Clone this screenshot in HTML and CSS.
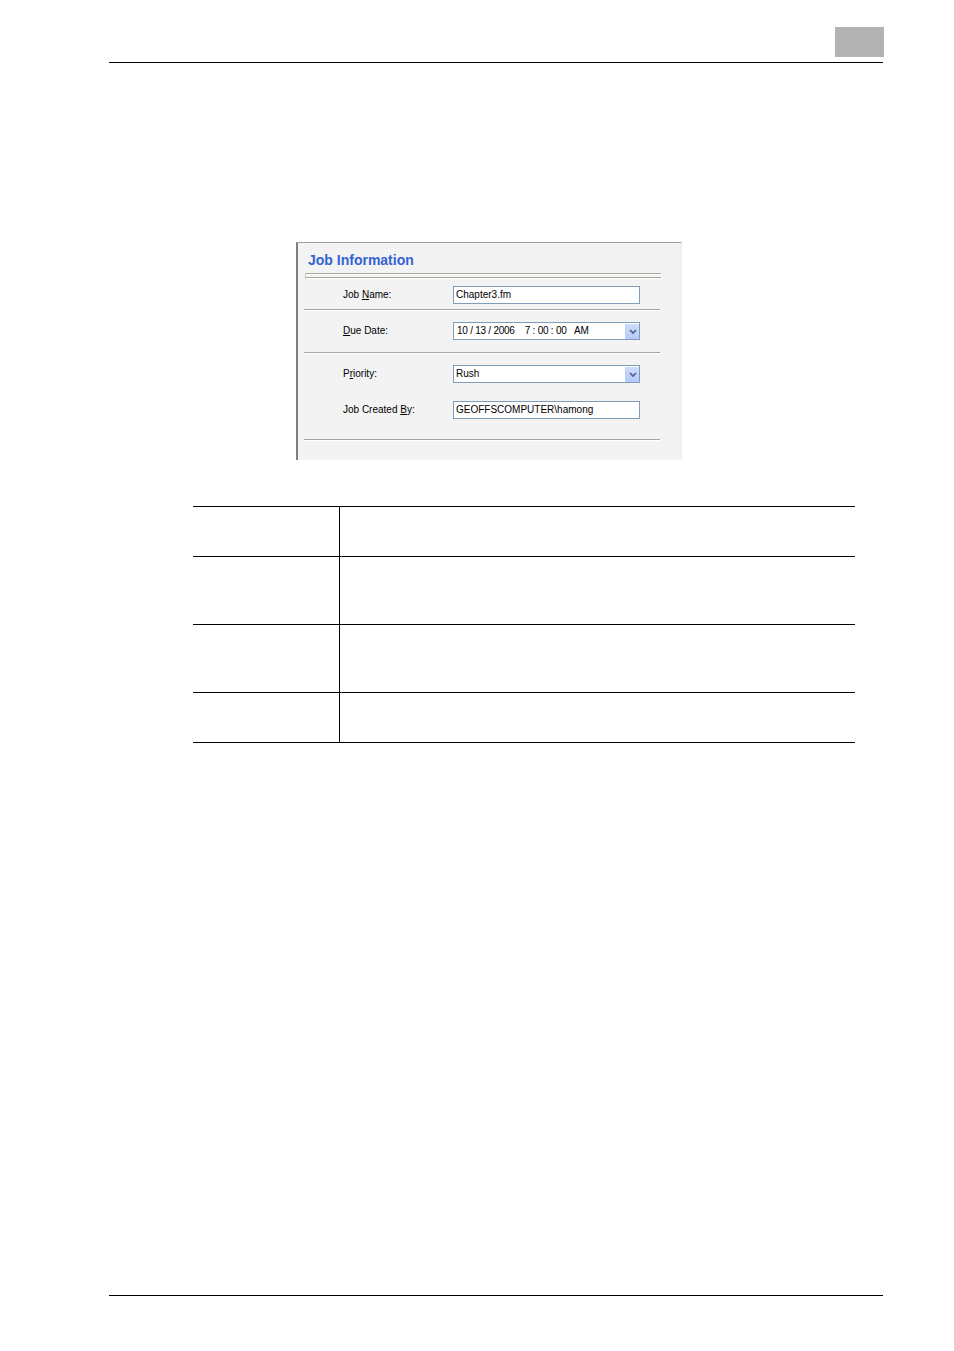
FILE: index.html
```html
<!DOCTYPE html>
<html lang="en">
<head>
    <meta charset="UTF-8">
    <meta name="viewport" content="width=device-width, initial-scale=1.0">
    <title>Job Information</title>
    <link rel="stylesheet" href="styles.css">
</head>
<body>

    <div class="page">
        <header class="running-head">
            <span class="chapter-tab"></span>
        </header>

        <div class="dialog">
            <h2 class="dialog-title">Job Information</h2>
            <div class="sep sep-double">
                <div class="sep-line"></div>
                <div class="sep-line"></div>
            </div>

            <div class="section section-name">
                <div class="field">
                    <label class="field-label">Job <u>N</u>ame:</label>
                    <div class="field-box">Chapter3.fm</div>
                </div>
            </div>
            <div class="sep"><div class="sep-line"></div></div>

            <div class="section section-date">
                <div class="field">
                    <label class="field-label"><u>D</u>ue Date:</label>
                    <div class="field-box combo">
                        <span class="date-text">10 / 13 / 2006&nbsp;&nbsp;&nbsp;&nbsp;7 : 00 : 00&nbsp;&nbsp;&nbsp;AM</span>
                        <span class="combo-btn">
                            <svg width="8" height="5" viewBox="0 0 8 5"><path d="M1 1 L4 4 L7 1" fill="none" stroke="#4d6185" stroke-width="1.7"/></svg>
                        </span>
                    </div>
                </div>
            </div>
            <div class="sep"><div class="sep-line"></div></div>

            <div class="section section-job">
                <div class="field">
                    <label class="field-label">P<u>r</u>iority:</label>
                    <div class="field-box combo">
                        <span>Rush</span>
                        <span class="combo-btn">
                            <svg width="8" height="5" viewBox="0 0 8 5"><path d="M1 1 L4 4 L7 1" fill="none" stroke="#4d6185" stroke-width="1.7"/></svg>
                        </span>
                    </div>
                </div>
                <div class="field">
                    <label class="field-label">Job Created <u>B</u>y:</label>
                    <div class="field-box">GEOFFSCOMPUTER\hamong</div>
                </div>
            </div>
            <div class="sep"><div class="sep-line"></div></div>
        </div>

        <div class="spec-table">
            <div class="spec-row spec-short"><div class="spec-key"></div><div class="spec-val"></div></div>
            <div class="spec-row spec-tall"><div class="spec-key"></div><div class="spec-val"></div></div>
            <div class="spec-row spec-tall"><div class="spec-key"></div><div class="spec-val"></div></div>
            <div class="spec-row spec-short"><div class="spec-key"></div><div class="spec-val"></div></div>
        </div>

        <footer class="running-foot"></footer>
    </div>

</body>
</html>
```

FILE: styles.css
```css
body {
    margin: 0;
    background-color: #fff;
    font-family: 'Liberation Sans', Arial, sans-serif;
    color: #000;
}

.page {
    width: 774px;
    margin-left: 109px;
    min-height: 1351px;
    display: flex;
    flex-direction: column;
}

/* page header with the grey chapter tab */
.running-head {
    display: flex;
    justify-content: flex-end;
    padding-top: 27px;
    padding-bottom: 5px;
    border-bottom: 1px solid #000;
}

.chapter-tab {
    width: 49px;
    height: 30px;
    margin-right: -1px;
    background-color: #b3b3b3;
}

/* screenshot of the dialog */
.dialog {
    width: 383px;
    margin-top: 179px;
    margin-left: 187px;
    padding-bottom: 19px;
    background-color: #f3f3f3;
    border-top: 1px solid #a0a0a0;
    border-left: 2px solid #808080;
    border-right: 1px solid #ecebe4;
}

.dialog-title {
    margin: 9px 0 0 10px;
    font-size: 14px;
    line-height: 16px;
    font-weight: bold;
    color: #3363d2; /* XP blue heading */
}

.sep {
    width: 356px;
    margin-left: 6px;
}

.sep-line {
    height: 1px;
    background-color: #a8a79c;
    border-bottom: 1px solid #fff;
}

.sep-double {
    width: 355px;
    margin-top: 5px;
    margin-left: 7px;
    border-left: 1px solid #c8c8c0;
    display: flex;
    flex-direction: column;
    gap: 2px;
}

.section {
    display: flex;
    flex-direction: column;
}

.section-name {
    padding: 7px 0 5px;
}

.section-date {
    padding: 11px 0 12px;
}

.section-job {
    padding: 11px 0 20px;
    gap: 18px;
}

.field {
    display: flex;
    align-items: center;
    height: 18px;
}

.field-label {
    width: 110px;
    margin-left: 45px;
    margin-top: -1px;
    font-size: 10px;
    color: #000;
}

.field-box {
    width: 183px;
    height: 16px;
    padding-left: 2px;
    background-color: #fff;
    border: 1px solid #7f9db9;
    font-size: 10px;
    line-height: 16px;
    white-space: nowrap;
}

.combo {
    display: flex;
    align-items: center;
    justify-content: space-between;
}

.date-text {
    padding-left: 1px;
    letter-spacing: -0.25px;
}

.combo-btn {
    width: 13px;
    height: 15px;
    display: flex;
    align-items: center;
    justify-content: center;
    background: linear-gradient(#cfdcfb, #b4c9f7);
    border-left: 1px solid #bccff5;
    border-radius: 1px;
}

/* empty four-row table below the dialog */
.spec-table {
    width: 662px;
    margin-top: 46px;
    margin-left: 84px;
    border-top: 1px solid #000;
}

.spec-row {
    display: grid;
    grid-template-columns: 146px 1fr;
    border-bottom: 1px solid #000;
}

.spec-short {
    height: 49px;
}

.spec-tall {
    height: 67px;
}

.spec-val {
    border-left: 1px solid #000;
}

.running-foot {
    margin-top: auto;
    margin-bottom: 55px;
    border-top: 1px solid #000;
}
```
